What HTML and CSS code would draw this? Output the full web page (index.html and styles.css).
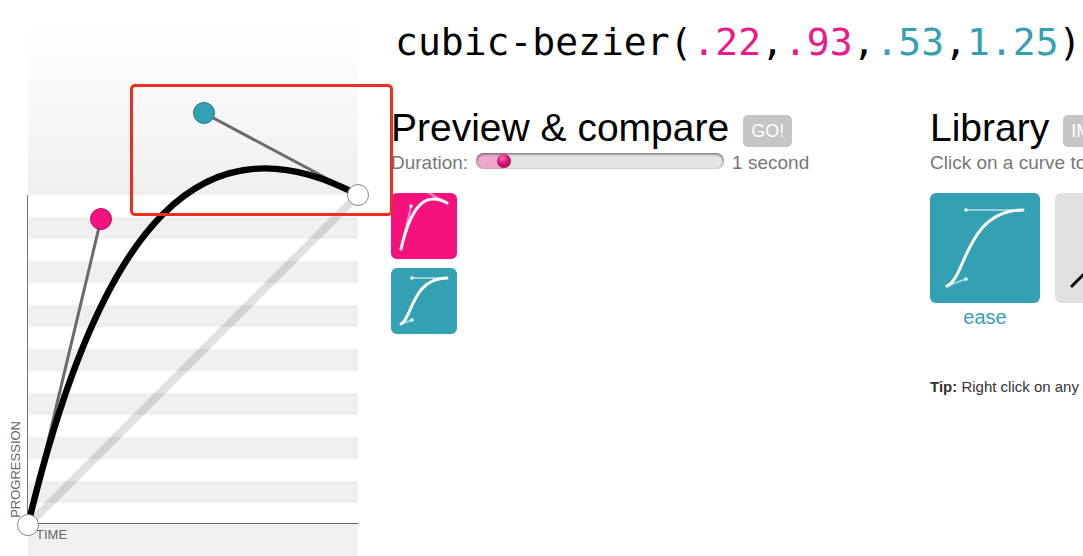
FILE: index.html
```
<!DOCTYPE html>
<html lang="en">
<head>
<meta charset="utf-8">
<title>cubic-bezier</title>
<link rel="stylesheet" href="styles.css">
</head>
<body>
<div class="app">
  <section class="graph" aria-label="Curve editor">
    <div class="overshoot"></div>
    <div class="plane"><span class="progression">PROGRESSION</span></div>
    <div class="undershoot"><span class="time">TIME</span></div>
    <svg class="curve" viewBox="0 0 391 556" aria-hidden="true">
      <path d="M28 525L358 195" stroke="#000" stroke-opacity=".12" stroke-width="8"/>
      <path d="M28 525L101 219M358 195L204 113" stroke="#6a6a6a" stroke-width="3"/>
      <path d="M28 525C101 219 204 113 358 195" stroke="#000" stroke-width="6.5"/>
    </svg>
    <button class="handle start" aria-label="Start point"></button>
    <button class="handle end" aria-label="End point"></button>
    <button class="handle p1" aria-label="First control point"></button>
    <button class="handle p2" aria-label="Second control point"></button>
    <div class="highlight"></div>
  </section>
  <main class="main">
    <h1 class="formula">cubic-bezier(<span class="first">.22</span>,<span class="first">.93</span>,<span class="second">.53</span>,<span class="second">1.25</span>)</h1>
    <div class="panels">
      <section class="panel">
        <div class="heading"><h2>Preview &amp; compare</h2><button class="action">GO!</button></div>
        <div class="note"><label for="duration">Duration:</label><input class="slider" id="duration" type="range" min="0" max="100" value="9"><span>1 second</span></div>
        <div class="previews">
          <button class="tile pink" aria-label="Current curve"><svg viewBox="0 0 66 66"><path class="arm" d="M10 56L20 13M56 10L34 -2"/><circle class="dot" cx="20" cy="13" r="1.5"/><path class="line" d="M10 56C20 13 34 -2 56 10"/></svg></button>
          <button class="tile teal" aria-label="Compared curve"><svg viewBox="0 0 66 66"><path class="arm" d="M10 56L21 52M56 10H21"/><circle class="dot" cx="21" cy="52" r="1.5"/><circle class="dot" cx="21" cy="10" r="1.5"/><path class="line" d="M10 56C21 51 21 10 56 10"/></svg></button>
        </div>
      </section>
      <section class="panel">
        <div class="heading"><h2>Library</h2><button class="action">IMPORT</button></div>
        <p class="note">Click on a curve to compare it with the current one.</p>
        <div class="library">
          <a class="item" href="#ease"><span class="card teal"><svg viewBox="0 0 110 110"><path class="arm" d="M17 93L36 86M93 17H36"/><circle class="dot" cx="36" cy="86" r="1.5"/><circle class="dot" cx="36" cy="17" r="1.5"/><path class="line" d="M17 93C36 85 36 17 93 17"/></svg></span>ease</a>
          <a class="item" href="#linear" aria-label="linear"><span class="card grey"><svg viewBox="0 0 110 110"><path class="line dark" d="M17 93L93 17"/></svg></span></a>
        </div>
        <p class="tip"><strong>Tip:</strong> Right click on any library curve and select “Copy Link Address”</p>
      </section>
    </div>
  </main>
</div>
</body>
</html>
```
FILE: styles.css
```
* { box-sizing: border-box; }
body { margin: 0; background: #fff; color: #000; font-family: "Liberation Sans", Arial, sans-serif; }
button { padding: 0; border: 0; font: inherit; cursor: pointer; }
h1, h2, p { margin: 0; font-weight: normal; white-space: nowrap; }
.app { display: grid; grid-template-columns: auto minmax(0, 1fr); min-height: 100vh; overflow: hidden; }

.graph { position: relative; display: flex; flex-direction: column; width: 391px; padding: 0 33px 0 28px; }
.overshoot { height: 195px; background: linear-gradient(#fff 12%, #f9f9f9 45%, #efefef); }
.plane { display: flex; align-items: flex-end; height: 329px; margin-left: -1px; border-left: 1px solid #777; border-bottom: 1px solid #666; background: repeating-linear-gradient(#fff 0 22px, #efefef 22px 44px); }
.progression { writing-mode: vertical-rl; transform: rotate(180deg); margin: 0 0 5px -20px; line-height: 16px; }
.undershoot { flex: 1; background: #f0f0f0; padding: 2px 8px 0; line-height: 16px; }
.progression, .time { color: #666; font-size: 13px; }
.curve { position: absolute; left: 0; top: 0; width: 391px; height: 556px; fill: none; }
.handle { position: absolute; width: 22px; height: 22px; margin: -11px; border: 1px solid #888; border-radius: 50%; background: #fff; }
.start { left: 28px; top: 525px; }
.end { left: 358px; top: 195px; }
.p1 { left: 101px; top: 219px; background: #f5127e; border-color: #b00d60; }
.p2 { left: 204px; top: 113px; background: #33a0b3; border-color: #247783; }
.highlight { position: absolute; z-index: 1; left: 130px; top: 84px; width: 263px; height: 132px; border: 3px solid #ee2f1f; border-radius: 5px; pointer-events: none; }

.main { padding-top: 18px; }
.formula { padding-left: 4px; font: 38px/48px "DejaVu Sans Mono", monospace; }
.first { color: #f01888; }
.second { color: #36a0b3; }
.panels { display: grid; grid-template-columns: minmax(0, 1fr) 153px; padding-top: 38px; }
.panel { min-width: 0; }
.heading { display: flex; align-items: center; gap: 14px; height: 48px; }
h2 { font-size: 39px; line-height: 48px; }
.action { flex: none; height: 32px; margin-top: 6px; padding: 0 8px; border-radius: 5px; background: #c5c5c5; color: #fff; font-size: 18px; }
.note { display: flex; height: 24px; line-height: 22px; color: #777; font-size: 19px; white-space: nowrap; }
.slider { -webkit-appearance: none; appearance: none; width: 248px; height: 16px; margin: 1px 8px 0; border-radius: 8px; background: linear-gradient(90deg, #eda9cc 28px, #e4e4e4 28px); box-shadow: inset 0 1px 3px #555; }
.slider::-webkit-slider-thumb { -webkit-appearance: none; width: 14px; height: 14px; border-radius: 50%; background: radial-gradient(circle at 40% 30%, #ff70b4, #d5106e 45%, #8d0747); }
.previews { display: flex; flex-direction: column; gap: 9px; padding-top: 17px; }
.tile, .card { display: block; border-radius: 6px; overflow: hidden; }
.tile { width: 66px; height: 66px; }
.card { width: 110px; height: 110px; }
.tile svg, .card svg { display: block; fill: none; stroke: #fff; stroke-linecap: round; }
.pink { background: #f5127e; }
.teal { background: #33a0b3; }
.grey { background: #e0e0e0; }
.line { stroke-width: 3; }
.arm { stroke-width: 2; stroke-opacity: .5; }
.dot { fill: #fff; opacity: .7; }
.dark { stroke: #000; }
.library { display: flex; gap: 15px; padding-top: 17px; }
.item { flex: none; color: #33a0b3; font-size: 20px; line-height: 28px; text-align: center; text-decoration: none; }
.tip { margin-top: 44px; color: #333; font-size: 15px; line-height: 24px; }
```
